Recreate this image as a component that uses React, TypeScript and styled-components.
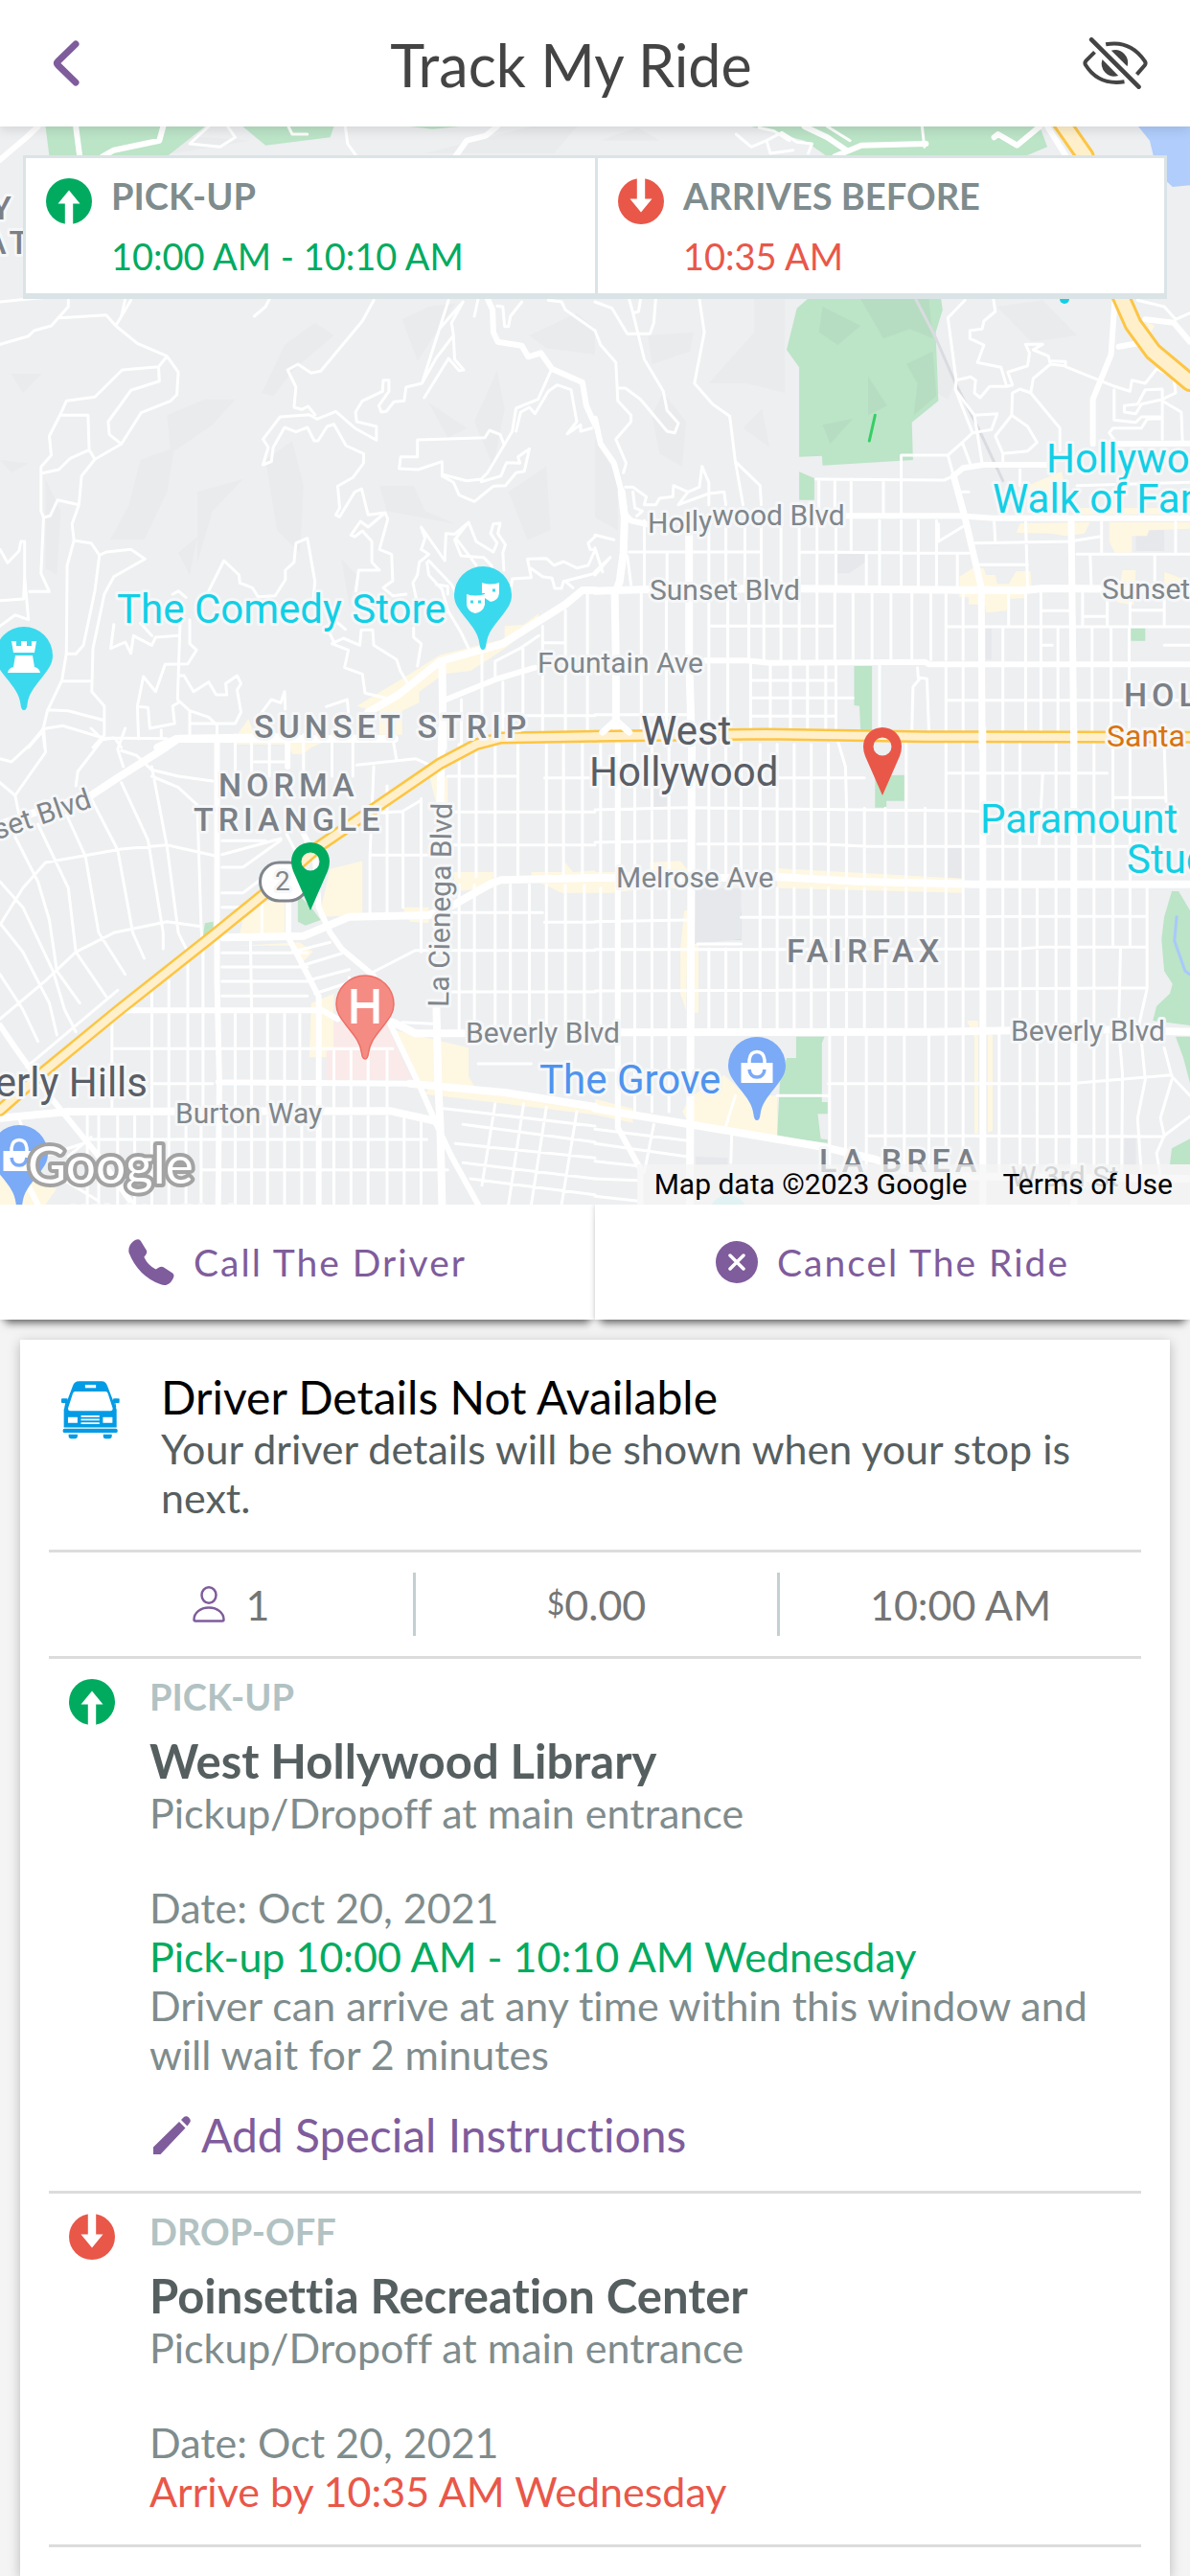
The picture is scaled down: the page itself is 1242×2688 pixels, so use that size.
import React from "react";
import styled, { createGlobalStyle } from "styled-components";

const color = {
  purple: "#7f5c9c",
  green: "#00ab60",
  red: "#e95749",
  slate: "#7f8c8d",
  slateDark: "#565f60",
  slateLight: "#b2c2c3",
  panelBorder: "#dae3e5",
  rule: "#dcdcdc",
  text: "#444444",
};

const GlobalStyle = createGlobalStyle`
  * { box-sizing: border-box; }
  html, body { margin: 0; background: #f4f4f4; }
  body, button { font-family: Lato, "Open Sans", sans-serif; font-variant-ligatures: none; }
  h1, h2, h3, p { margin: 0; font-weight: 400; }
`;

/* ---------- Layout ---------- */

const Page = styled.div`
  display: flex;
  flex-direction: column;
  min-height: 100vh;
`;

const Header = styled.header`
  display: flex;
  align-items: center;
  height: 132px;
  background: #fff;
  box-shadow: 0 3px 12px rgba(0, 0, 0, 0.12);
  position: relative;
  z-index: 1;
`;

const Title = styled.h1`
  flex: 1;
  padding-top: 3px;
  text-align: center;
  font-size: 61px;
  line-height: 72px;
  color: ${color.text};
`;

const IconButton = styled.button<{ $side: "left" | "right" }>`
  display: flex;
  align-items: center;
  align-self: stretch;
  justify-content: ${(p) => (p.$side === "left" ? "flex-start" : "flex-end")};
  width: ${(p) => (p.$side === "left" ? "84px" : "134px")};
  padding: ${(p) => (p.$side === "left" ? "0 0 0 55px" : "0 44px 0 0")};
  border: 0;
  background: none;
  color: ${(p) => (p.$side === "left" ? color.purple : color.text)};
  svg { flex: none; }
`;

const MapArea = styled.section`
  position: relative;
  overflow: hidden;
  background: #edeff1;
`;

const MapCanvas = styled.svg`
  display: block;
  width: 100%;
  height: auto;
`;

const TimesPanel = styled.div`
  position: absolute;
  top: 30px;
  left: 24px;
  right: 24px;
  display: grid;
  grid-template-columns: 1fr 1fr;
  background: #fff;
  border: 3px solid ${color.panelBorder};
  border-bottom-width: 6px;
`;

const TimeCell = styled.div`
  display: flex;
  gap: 20px;
  padding: 15px 21px;
  & + & { border-left: 3px solid ${color.panelBorder}; }
`;

const TimeText = styled.div`
  display: flex;
  flex-direction: column;
  gap: 15px;
`;

const StopLabel = styled.h2<{ $tone: string }>`
  font-size: 38px;
  line-height: 48px;
  font-weight: 700;
  color: ${(p) => p.$tone};
`;

const TimeValue = styled.p<{ $tone: string }>`
  font-size: 38px;
  line-height: 48px;
  color: ${(p) => p.$tone};
`;

const BadgeBox = styled.svg`
  flex: none;
  width: 48px;
  height: 48px;
  margin-top: 6px;
`;

const Attribution = styled.footer`
  position: absolute;
  right: 0;
  bottom: 0;
  display: flex;
  gap: 37px;
  height: 42px;
  padding: 0 18px;
  background: rgba(245, 245, 245, 0.7);
  font: 30px/42px Roboto, sans-serif;
  color: #000;
  a { color: inherit; text-decoration: none; }
`;

const Actions = styled.nav`
  display: grid;
  grid-template-columns: 1fr 1fr;
  background: #fff;
`;

const ActionButton = styled.button`
  display: flex;
  align-items: center;
  justify-content: center;
  gap: 20px;
  height: 120px;
  border: 0;
  background: #fff;
  color: ${color.purple};
  font-size: 39px;
  line-height: 48px;
  letter-spacing: 2px;
  box-shadow: 0 0 6px rgba(0, 0, 0, 0.2), 0 10px 8px -6px rgba(0, 0, 0, 0.5);
`;

const Card = styled.main`
  flex: 1;
  margin: 21px 21px 0;
  padding: 0 30px 27px;
  background: #fff;
  box-shadow: 0 3px 12px rgba(0, 0, 0, 0.25);
`;

const Driver = styled.section`
  display: flex;
  gap: 43px;
  padding: 31px 30px 29px 13px;
  border-bottom: 3px solid ${color.rule};
  svg { flex: none; margin-top: 12px; }
`;

const DriverTitle = styled.h2`
  font-size: 48px;
  line-height: 57px;
  color: #000;
`;

const Line = styled.p<{ $tone?: string }>`
  font-size: 43px;
  line-height: 51px;
  color: ${(p) => p.$tone ?? color.slate};
`;

const Stats = styled.section`
  display: grid;
  grid-template-columns: 1fr 1fr 1fr;
  padding: 21px 0;
  border-bottom: 3px solid ${color.rule};
`;

const Stat = styled.div`
  display: flex;
  align-items: center;
  justify-content: center;
  gap: 22px;
  height: 66px;
  font-size: 43px;
  line-height: 51px;
  color: #757575;
  & + & { border-left: 3px solid #c3cfd0; }
`;

const Currency = styled.span`
  font-size: 32px;
  line-height: 32px;
  vertical-align: 6px;
`;

const Stop = styled.section`
  display: flex;
  gap: 36px;
  padding: 15px 30px 30px 21px;
  border-bottom: 3px solid ${color.rule};
`;

const StopName = styled.h3`
  margin-top: 15px;
  font-size: 49px;
  line-height: 57px;
  font-weight: 700;
  color: ${color.slateDark};
`;

const Schedule = styled.div`
  margin-top: 48px;
`;

const InstructionsButton = styled.button`
  display: flex;
  align-items: center;
  gap: 11px;
  margin-top: 30px;
  padding: 0 0 0 4px;
  border: 0;
  background: none;
  color: ${color.purple};
  font-size: 48px;
  line-height: 57px;
`;

/* ---------- Icons ---------- */

const ArrowBadge = ({ down = false }: { down?: boolean }) => (
  <BadgeBox viewBox="0 0 48 48" aria-hidden="true">
    <circle cx="24" cy="24" r="24" fill={down ? color.red : color.green} />
    <path
      d="M24 12.5 35.5 26.5H28.2V48.5H19.8V26.5H12.5Z"
      fill="#fff"
      transform={down ? "rotate(180 24 24)" : undefined}
    />
  </BadgeBox>
);

const BackIcon = () => (
  <svg width="28" height="50" viewBox="0 0 28 50" fill="none" stroke="currentColor" strokeWidth="7" strokeLinecap="round" strokeLinejoin="round">
    <path d="M24 5 5.500 23Q3.500 25 5.500 27L24 45" />
  </svg>
);

const HiddenIcon = () => (
  <svg width="68" height="54" viewBox="61 57 203 162" fill="none" stroke="currentColor" strokeWidth="12">
    <path d="M88 64 236 212" strokeWidth="14" strokeLinecap="round" />
    <path d="M98 103 71 130Q65 137 70 144 110 208 191 196" />
    <path d="M133 79Q208 64 254 130 260 137 255 144L230 173" />
    <path d="M150 98A40 40 0 0 1 200 148Z" fill="currentColor" stroke="none" />
    <path d="M122 126A40 40 0 0 0 172 177Z" fill="currentColor" stroke="none" />
  </svg>
);

const PhoneIcon = () => (
  <svg width="48" height="48" viewBox="45 68 144 145" fill="currentColor">
    <path d="M50 86Q60 71 74 69 80 68 84 75L102 104Q104 110 100 116L94 125Q106 152 131 163L141 157Q148 153 155 156L184 175Q190 180 187 188 181 206 165 212 155 214 145 210 75 184 46 110 44 97 50 86Z" />
  </svg>
);

const CancelIcon = () => (
  <svg width="44" height="44" viewBox="0 0 44 44">
    <circle cx="22" cy="22" r="22" fill="currentColor" />
    <path d="M15 15 29 29M29 15 15 29" stroke="#fff" strokeWidth="3.500" strokeLinecap="round" />
  </svg>
);

const BusIcon = () => (
  <svg width="61" height="61" viewBox="72 62 184 184" fill="#039be5" aria-hidden="true">
    <path d="M80 208V152L108 78Q113 63 128 63H199Q212 63 217 78L246 152V208Z" />
    <path d="M116 95H211Q217 95 219 102L234 149Q234 156 228 156H99Q93 156 93 149L108 102Q110 95 116 95Z" fill="#fff" />
    <rect x="147" y="74" width="34" height="10" fill="#fff" />
    <rect x="93" y="176" width="30" height="18" fill="#fff" />
    <rect x="203" y="176" width="30" height="18" fill="#fff" />
    <path d="M134 173H192M134 184H192M134 195H192" stroke="#fff" strokeWidth="5" />
    <rect x="77" y="212" width="172" height="13" rx="5" />
    <path d="M95 230H123V238Q121 244 115 244H103Q97 244 95 238ZM204 230H231V238Q229 244 223 244H211Q205 244 204 238Z" />
    <rect x="72" y="117" width="20" height="14" rx="3" />
    <rect x="235" y="117" width="20" height="14" rx="3" />
    <path d="M88 124 84 145M239 124 243 145" stroke="#039be5" strokeWidth="4" />
  </svg>
);

const PersonIcon = () => (
  <svg width="34" height="38" viewBox="0 0 34 38" fill="none" stroke={color.purple} strokeWidth="2.500" aria-hidden="true">
    <ellipse cx="17" cy="9.500" rx="7.500" ry="8.200" />
    <path d="M17 22.500C8 22.500 1.500 28 1.500 35Q1.500 36.500 3 36.500H31Q32.500 36.500 32.500 35C32.500 28 26 22.500 17 22.500Z" />
  </svg>
);

const PencilIcon = () => (
  <svg width="39" height="40" viewBox="0 0 39 40" fill="currentColor" aria-hidden="true">
    <path d="M0 40V32.500L27 6 33.500 12.500 7.500 40ZM29 4 32 1Q34.500-.8 37 1.500 40 4.500 38 7L35.500 10.500Z" />
  </svg>
);

/* ---------- Map ---------- */

type Tile = { x: number; y: number; sx: number; sy: number };

/* Every tile keeps its own local units; these origins place it on the map. */
const tiles: Record<string, Tile> = {
  top: { x: 0, y: 0, sx: 1242 / 1568, sy: 1 / 3 },
  nw: { x: 0, y: 300, sx: 621 / 1568, sy: 1 / 3 },
  ne: { x: 621, y: 300, sx: 621 / 1568, sy: 1 / 3 },
  sw: { x: 0, y: 760, sx: 621 / 1568, sy: 1 / 3 },
  se: { x: 621, y: 760, sx: 621 / 1568, sy: 1 / 3 },
};

const project = (tile: string, data: string, close = false) => {
  const t = tiles[tile];
  return data
    .split(";")
    .map((line) => {
      const pts = line
        .trim()
        .split(/\s+/)
        .map((pair) => {
          const [x, y] = pair.split(",").map(Number);
          return `${(t.x + x * t.sx).toFixed(1)} ${(t.y + y * t.sy).toFixed(1)}`;
        });
      return `M${pts.join("L")}${close ? "Z" : ""}`;
    })
    .join("");
};

/* Straight grid streets: vertical ones at each x, horizontal ones at each y. */
const verticals = (xs: number[], from: number, to: number) =>
  xs.map((x) => `${x},${from} ${x},${to}`).join(";");
const horizontals = (ys: number[], from: number, to: number) =>
  ys.map((y) => `${from},${y} ${to},${y}`).join(";");

const minor: Record<string, string> = {
  top: "275,396 250,450 290,460 310,430 300,396;455,396 458,450 470,490;970,420 990,460 1010,440 1030,415 1050,445 1070,450 1065,480;1010,440 1015,480 1045,470;1000,400 1020,410 1040,440;1215,396 1218,460;380,396 385,420 405,420;1090,396 1120,440;0,945 40,935 90,925;355,936 350,960 335,990;165,936 160,990;630,936 625,990;1545,300 1535,330",
  nw: [
    "0,178 75,152 90,135 135,120 180,60 180,30;157,95 280,86 305,120 345,40",
    "305,120 362,175 440,215 418,248 322,258 250,343 175,355 158,400 130,465 135,525 108,562 108,700 115,720 108,895 130,952 78,952",
    "440,215 470,265 466,335 450,355 372,392 320,490 288,460 285,420 345,322 420,293 418,248",
    "320,490 250,538 215,590 208,680 190,740 195,792 177,870 175,1145 163,1230 125,1325 112,1390 75,1440",
    "158,400 232,400 235,508 185,535 155,570 108,582;235,508 250,538;115,720 132,715 152,665 208,680",
    "195,792 240,800 262,838 250,950 220,1120 200,1147 175,1147",
    "262,838 280,828 345,820 382,850 300,905 275,960 245,1130 242,1265 275,1310 275,1400 245,1440",
    "0,820 20,862 50,825 55,795 65,795 65,905 75,1040 40,1025 0,1060;65,905 62,975 0,980",
    "163,1232 240,1232;125,1322 180,1325 275,1355;112,1382 165,1372 272,1410 440,1412;112,1382 118,1440;305,1415 320,1440",
    "985,40 955,105 845,262 820,268 785,240 758,258 780,312 775,375 795,382 812,372 830,398",
    "693,555 707,500 693,475 738,405 815,398 835,412 885,388 935,440 992,478 992,435 940,420 937,390 955,355 1008,325 1010,290 1025,290 1025,325 998,370 1005,390 1018,388 1038,358 1065,355 1070,312 1112,300 1158,130 1182,40",
    "693,555 715,545 720,500 750,438 780,452 810,438 828,480 838,480 862,435 880,428 912,495 958,520 958,550 930,595 890,622 895,690 885,712 895,718 935,640 953,630 970,712 1015,705 1022,725 1000,820 1032,835 1035,918 1010,940 1035,965 1070,960",
    "1015,705 970,750 950,732 925,775 935,780 955,762 980,795 980,860 1000,885 945,885 938,950",
    "1220,45 1190,110 1195,150 1150,220 1112,300;1220,45 1158,130;1195,150 1198,225 1222,258 1210,260 1182,222 1118,345",
    "1310,58 1325,60 1330,122 1340,122 1345,90 1375,45;1445,40 1480,45 1490,70 1568,135",
    "1450,265 1418,350 1360,378 1350,450 1285,580 1268,600 1230,605 1165,585 1165,545 1102,570 1052,567 1056,530 1100,530 1100,477 1278,470 1290,447 1318,460 1328,490",
    "1495,458 1520,420 1505,320 1468,305 1445,325 1410,395 1395,375 1372,390 1360,450",
    "1395,505 1382,575 1360,580 1332,620 1300,622 1250,670 1210,650 1195,610 1165,590",
    "1268,608 1320,590 1335,548 1370,550 1365,530 1392,508;1495,458 1530,430 1530,450 1560,440",
    "550,950 590,855 630,900 632,925 665,940 680,968 725,965 752,915 752,885 775,860 780,800 810,785 830,920 825,985",
    "1110,750 1120,785 1110,820 1130,835 1105,860 1100,900 1088,925 1100,990",
    "1110,750 1172,855 1175,770 1198,772 1235,735 1255,795 1300,828 1310,800 1293,770 1300,740 1318,738 1312,770 1332,805 1325,830 1328,885",
    "1235,735 1198,790 1215,840 1275,845 1295,870 1305,960;1205,790 1240,845 1255,870;1130,855 1190,930 1220,1000;1125,860 1130,900 1165,945 1180,1010 1215,1080 1235,1130",
    "1568,780 1550,800 1555,820 1568,822 1550,870 1520,878 1485,858 1460,870 1440,848 1390,850 1400,908 1350,912 1345,950",
    "1400,880 1430,905 1455,910 1462,942 1480,942 1485,920 1568,895;1490,920 1510,940",
    "455,960 470,950 490,970;475,1040 468,1290 500,1325 550,1345 572,1370 572,1413;292,1130 330,1110 345,1145 352,1090 400,1120 410,1095 470,1090;292,1130 300,1055;370,1050 400,1090",
    "500,1040 500,1115 518,1135 495,1178 435,1180 410,1265 378,1218 362,1310 365,1413",
    "470,1215 485,1215 510,1265 550,1235 570,1275 598,1275 595,1240 625,1215 635,1240 625,1260 635,1330 620,1365 500,1365;500,1325 500,1413",
    "362,1312 390,1315 395,1380 460,1365 455,1310 470,1300;425,1385 425,1410;690,1330 715,1290 740,1300 750,1265 752,1320;860,1312 915,1290 918,1330",
    "875,1115 905,1098 948,1120 952,1072 982,1072 985,1120 1045,1165 1055,1200 1075,1240;875,1115 918,1135 908,1190 955,1210 962,1270 1015,1285;860,1060 880,1110;890,1050 910,1070",
    "1090,1065 1090,1095 1110,1115 1100,1185;1305,1220 1305,1170 1370,1130 1420,1090;1432,1112 1490,1112;1325,1340 1568,1340;1150,930 1180,935 1180,960",
    verticals([1270], 1150, 1440), verticals([1216], 1290, 1440), verticals([1325], 1235, 1390),
    verticals([1378], 1130, 1390), verticals([1430], 1060, 1390), verticals([1490], 1010, 1390), verticals([1548], 960, 1390),
  ].join(";"),
  ne: [
    "0,45 45,65 85,145 145,145 155,110 160,36;90,36 100,80 115,75 120,36;100,80 130,225 180,325 190,385 220,425 210,455 190,450 120,350 80,315 60,315",
    "0,135 15,180 55,235 60,355 95,400 95,420 55,475 82,550 75,580",
    "275,36 288,140 262,300 310,365 355,403 370,545 435,620 438,680;370,545 390,680",
    "80,625 100,625 135,655 130,680 160,680 170,660 205,655 207,620 245,640 275,625 282,560 300,610 300,680;245,640 220,680 300,645 340,640 345,680;100,640 105,690 125,700 110,715",
    "975,40 930,95 952,290 950,320 1000,400 1060,395 1045,445 995,455;950,320 995,455;1000,400 1020,550",
    "952,290 990,280 1003,290 1000,330 1015,345 1040,310 1085,310 1070,250 1008,235 1025,180 988,160 988,135 1020,130 1025,105 1055,75 1050,36",
    "1085,310 1100,305 1088,265 1140,245 1145,205 1135,178 1180,178 1155,195 1195,215 1200,240 1240,245 1240,232 1205,230;1240,248 1370,310 1410,325;1200,240 1155,285 1148,330",
    "1148,330 1225,440 1225,510;1148,330 1120,318 1100,330 1098,400 1140,435 1165,485 1140,512 1075,520 1055,465 1098,400;1075,520 1075,550",
    "1525,280 1530,330 1495,350 1440,365 1425,395 1395,390 1395,370 1430,365 1450,320 1495,318 1495,475;1368,320 1368,415 1425,422 1440,405 1490,405",
    "1495,355 1545,390 1548,480;1410,325 1415,290 1450,300 1480,255 1525,280;1370,480 1355,455 1365,440 1440,440 1455,412 1495,410;1430,40 1500,60 1530,100 1568,80",
    "582,600 920,603 945,590;807,603 807,525 930,525 968,485 995,455;930,525 945,590;968,485 990,555",
    "905,795 975,745;1000,800 1250,795 1330,780;1015,868 1140,868;1135,735 1140,940;1052,735 1055,795;1270,835 1568,835;1305,835 1308,940;1120,570 1120,620;1270,620 1568,610;968,640 985,640;1335,735 1335,835;1475,835 1475,920;1530,735 1530,835",
    "1180,1012 1250,1012;1285,1030 1350,1030;1410,1010 1500,1010;1180,1120 1205,1120;1500,1120 1568,1120;835,1390 838,1250 858,1222 875,1225 880,1390;850,1190 852,1222",
    "90,828 435,828;540,828 985,832;905,740 905,795;0,775 50,790;0,890 40,845;0,815 20,890;40,845 0,900;85,840 95,930;0,1337 245,1337",
    verticals([130, 300, 345, 395, 438, 490, 538, 585, 635, 750, 807, 852, 900], 730, 940),
    verticals([190, 715, 955], 832, 940), verticals([675], 720, 820), verticals([590, 632, 675, 760, 807], 600, 712),
    verticals([122, 188, 300, 350, 405, 445, 490, 538, 585, 632, 680, 730, 780, 835, 885, 925, 970], 955, 1165),
    verticals([122, 188, 300, 350, 410, 462, 515, 560, 608, 635, 750, 925, 970], 1175, 1390),
    verticals([1075, 1135, 1175, 1220, 1310, 1360, 1408], 1062, 1390), verticals([1090, 1135, 1175, 1285, 1350, 1410, 1500], 955, 1062),
    horizontals([1060], 305, 630), horizontals([1062], 925, 1568), horizontals([1230, 1285, 1342], 410, 635), horizontals([1292], 925, 1568), horizontals([1285], 635, 680),
  ].join(";"),
  sw: [
    "0,615 60,500 120,420 320,378 440,365 570,400;585,395 740,345;0,910 120,790 200,700 300,640 440,605 530,620",
    "40,340 100,480 130,600 150,760 210,860;100,300 180,500 200,700 280,840;175,270 225,400 260,640 330,770;240,220 310,380 350,640 380,720;320,170 390,350 430,640 430,690;400,120 440,370 470,640 495,700",
    "0,480 60,560 140,760 170,880 200,950;0,610 60,700 130,860 150,960;0,770 60,880 100,980;520,240 530,620 535,700",
    "0,95 30,105 80,50 115,0;115,0 120,75 40,210 50,270;200,180 205,135 270,35 300,30;270,35 240,0;310,65 330,0;320,70 360,85 400,130 470,150 560,165;310,65 325,120;0,170 40,210",
    "70,1060 310,820;400,150 470,185 520,240;585,435 640,435 740,350;585,352 700,352;585,515 640,515 690,470;585,560 640,560;585,605 620,605;690,540 690,650",
    "980,765 1095,695;770,700 870,670;790,745 900,705;810,790 920,755;830,830 935,790;920,780 940,830;660,660 663,880",
    "940,115 1095,95 1160,130;985,120 975,400 975,580;985,265 1060,260 1110,225;975,397 1125,397;1020,180 1020,580;1062,260 1062,560;1110,220 1110,700;670,105 750,105;1035,30 1045,100",
    "1170,1190 1568,1245;1200,1300 1568,1345;1220,1360 1568,1410;1240,1410 1568,1460;1220,1240 1568,1295;1305,1175 1270,1430;1380,1175 1340,1491;1440,1185 1400,1491;1520,1200 1480,1491",
    "50,1220 70,1290;60,1360 220,1300;150,1400 260,1480;180,1340 240,1280;1060,920 1140,925;755,330 785,400",
    verticals([400, 445, 495, 535, 620, 663, 705, 750, 790], 895, 1195), verticals([295], 920, 1190), verticals([880, 925, 970, 1020], 1010, 1190),
    verticals([400, 445], 790, 880), verticals([495, 535], 700, 880),
    verticals([230, 260, 310, 355, 400, 445, 490, 530, 620, 663, 705, 750, 795, 880, 925, 970, 1020, 1065, 1110], 1215, 1491),
    verticals([620, 663, 710, 800, 875, 930], 20, 150),
    verticals([1210, 1255, 1305, 1365, 1440, 1485, 1535], 50, 465), verticals([1210, 1250, 1305, 1345, 1395, 1440, 1490, 1540], 490, 945),
    horizontals([703, 747, 792, 838], 585, 810), horizontals([1287], 240, 1125), horizontals([1382], 530, 1180), horizontals([1003], 295, 1035), horizontals([1112], 400, 560),
    horizontals([150], 1180, 1365), horizontals([155], 1435, 1568), horizontals([262, 365], 1190, 1568), horizontals([695], 1095, 1568), horizontals([825], 1180, 1568),
    horizontals([577], 1140, 1430), horizontals([607], 1435, 1568), horizontals([1050], 1260, 1400),
  ].join(";"),
  se: [
    "0,255 240,248 480,252 700,255 970,258 1010,260;0,357 240,352;270,362 600,362 720,370 1455,370;0,605 245,600;385,592 1455,588;0,692 480,692 1120,690 1180,685 1455,685;0,822 480,820 1455,812",
    "615,1112 1250,1112 1520,1085;715,1275 1500,1278;480,155 710,155;925,140 1350,140;1365,217 1500,217;480,1150 618,1150;270,675 385,675;640,40 660,120 663,250",
    "1180,140 1170,370;1500,50 1505,230;1455,500 1455,815 1435,920 1450,1100 1430,1220 1440,1400;1385,690 1380,940 1390,1080 1388,1400;1500,1000 1520,1090 1568,1150;1520,1100 1490,1220 1500,1275 1480,1330 1490,1400;1568,1215 1500,1275",
    "0,1255 240,1290;0,1300 240,1340;0,1355 115,1370;0,1410 115,1415;0,1465 115,1480;155,1240 130,1390;360,1275 358,1360;370,1150 345,1245",
    verticals([15, 105, 150, 195, 300, 345, 385, 435, 480, 525, 570, 615], 50, 460), verticals([663, 710, 765, 820, 870, 925, 970], 250, 475), verticals([820, 925, 970], 40, 250),
    verticals([15, 105, 150, 195, 435, 480, 525, 570, 615, 663, 710, 765, 820, 870, 925, 970], 500, 940), verticals([300, 345, 385], 690, 940),
    verticals([1075, 1120, 1215, 1315, 1365, 1410], 40, 480), verticals([1075, 1120, 1165, 1215, 1315], 500, 940), verticals([1365, 1410], 500, 680),
    verticals([105, 150, 195], 960, 1200), verticals([618, 660, 715, 765, 815, 880, 925, 970], 960, 1380), verticals([1065, 1120, 1165, 1215, 1315, 1350], 960, 1390), horizontals([1070], 0, 100),
  ].join(";"),
};

const medium: Record<string, string> = {
  top: "50,396 35,430 0,500;100,396 105,490;215,396 210,440 150,470 135,490;655,396 640,425 615,440 600,490;1060,396 1090,430 1115,470;1100,490 1135,455 1220,450;1370,396 1340,455 1315,420 1310,430;1380,396 1405,490",
  nw: "1285,35 1298,70 1300,140 1312,170 1375,182 1392,217 1425,205 1455,255 1535,297 1545,370 1568,430;1175,1290 1310,1225 1410,1190",
  ne: "0,410 15,490 50,550 70,640 80,710 95,730 140,742;945,590 970,565 1025,555 1190,555;1370,36 1360,210 1312,350 1312,490;1365,490 1568,488;1380,185 1430,175;1450,100 1525,110 1568,170;290,1168 400,1168 460,1175 870,1172 880,1180 1568,1180;640,715 960,715 1050,722 1568,722",
  sw: "758,20 758,120;572,40 572,790 578,1100 575,1491;800,330 830,400 840,560 870,640 900,690 985,775 1030,930 1110,1130 1150,1240 1190,1340 1260,1491;760,540 760,655 840,840 840,1491;330,883 850,883 890,910;575,1108 1080,1112;0,930 40,1000 130,1150 260,1340 350,1491;0,1350 70,1420 100,1491",
  se: "60,50 60,1250 120,1380 120,1491",
};

const major: Record<string, string> = {
  nw: "1568,948 1535,948 1490,992 1325,1115 1160,1170 1050,1275 970,1330;415,1440 465,1413 1040,1413;1165,1170 1168,1440",
  ne: "0,950 50,948 145,945 530,943 1130,948 1180,942 1568,945;70,640 78,720 75,830 65,920 52,960 55,1160 55,1390;248,780 248,1160 255,1440",
  sw: "730,28 470,32 430,65 310,155 240,210 100,260 0,300;1165,0 1160,240;1150,880 1155,1120 1160,1240 1165,1491;1220,955 1095,955 1035,920;1568,468 1320,475 1295,485 1200,550 1130,585 920,590 800,650 590,655;1080,1112 1330,1140 1568,1185;0,1220 180,1200 1030,1198 1150,1230",
  se: "255,50 250,1491;0,468 240,470 480,465 700,480 1000,488 1568,488;0,952 890,950 1300,942 1568,950;0,1190 250,1240 600,1310 740,1350 850,1400 1568,1410",
};

const overpasses: Record<string, string> = {
  ne: "945,590 975,720 1018,940 1020,1440;1255,730 1262,1440;20,1392 55,1355 90,1392",
  se: "1022,0 1022,1491;1262,0 1262,1491",
};

const parks: Record<string, string> = {
  top: "60,396 270,396 220,490 65,490;320,396 440,396 435,430 350,455;540,396 605,396 570,404;990,396 1370,396 1380,460 1350,490 1090,490 1060,440",
  ne: "560,36 532,65 505,195 538,250 538,530 598,527 600,557 838,540 835,422 905,355 898,140 916,70 912,36;538,577 578,597 578,665 538,665;683,1185 730,1185 730,1385 700,1385 697,1310 683,1308;1412,1066 1450,1066 1450,1106 1412,1106",
  sw: "785,520 820,560 845,600 805,617 785,605;540,610 562,605 562,635 535,650",
  se: "738,148 815,146 815,227 768,227 768,248 738,248;333,582 385,573 385,662 348,662 333,620;530,965 605,965 598,985 598,1170 613,1170 613,1207 587,1207 595,1285 613,1288 613,1298 480,1278 487,1110 505,1032 530,1032;1520,510 1538,510 1568,570 1568,930 1470,915 1480,870 1515,830 1522,800 1500,760 1493,660 1500,590;1530,965 1568,965 1568,1110 1550,1030;1568,1285 1520,1315 1515,1365 1568,1365",
};

const shops: Record<string, string> = {
  nw: "940,1310 1080,1210 1160,1150 1330,1100 1330,1060 1380,1055 1420,1020 1420,1045 1330,1130 1240,1200 1170,1210 1105,1265 1105,1300 1060,1325 980,1325;625,1400 655,1350 670,1400;1000,1320 1060,1320 1060,1400 1000,1400",
  ne: "1120,738 1110,768 1200,770 1240,778 1290,770 1305,735;1355,735 1568,735 1568,755 1460,760 1455,778 1415,778 1415,830 1370,830 1355,795;960,905 1000,875 1025,880 1030,900 1055,900 1060,928 1090,928 1110,888 1148,888 1150,935 1135,972 1088,975 1085,1012 1030,1018 1028,992 985,992 985,970 960,970;1140,620 1230,575 1250,700 1140,705;1270,690 1568,690 1568,710 1270,710;1390,885 1425,885 1420,995 1375,985;1500,890 1568,920 1500,930;1395,130 1420,165 1440,140;1450,105 1475,120 1465,140",
  sw: "870,440 955,415 955,585 840,590;640,600 700,540 750,540 750,650 630,650;1040,945 1235,1000 1235,1090 1250,1120 1110,1110;1130,140 1180,150 1180,240 1150,240;1195,450 1300,450 1300,500 1200,510;1400,450 1480,450 1490,420 1510,450 1568,445 1568,515 1480,515 1400,470;1130,1125 1568,1175 1568,1210 1120,1145;820,860 880,830 880,1030 815,1030;630,680 790,670 825,700 790,740 765,680;620,35 870,35 820,60 800,80 770,80 760,50 620,50;0,1400 100,1400 150,1440 120,1491 0,1491;1060,560 1130,560 1130,610 1080,605",
  se: "0,450 145,450 145,420 225,415 245,445 245,500 145,500 45,515 0,515;480,438 970,470 970,515 480,500;235,570 245,570 240,885 225,830 225,690;262,675 273,675 273,890 262,890;980,915 1010,915 1010,1270 1000,1270 1000,970;1035,960 1048,960 1048,1260 1035,1265;250,1155 340,1085 400,1150 480,1150 480,1278 250,1240 230,1200;0,1160 100,1190 100,1235 0,1210",
};

const blocks: Record<string, string> = {
  ne: "640,835 712,835 712,860 670,895 635,895;1425,760 1500,760 1500,825 1425,825;1030,1065 1045,1065 1045,1165 1030,1165",
  se: "262,500 385,500 385,660 262,675;930,375 970,375 970,475 930,475;155,190 190,190 190,245 155,245;265,1340 350,1345 350,1370 265,1370;1395,1280 1425,1280 1425,1370 1395,1370",
  sw: "680,550 695,570 685,600",
};

const hills: Record<string, string> = {
  top: "560,480 700,396 760,396 730,480;790,440 840,400 870,440;170,470 210,420 330,440 230,480",
  nw: "30,270 110,270 60,330;690,330 750,180 830,110 880,150 780,250 720,340;440,400 540,350 620,350 560,430 450,520;370,540 460,500 440,640 380,790 290,790 340,680;700,540 770,480 800,620 790,830 730,760;520,640 640,600 560,700 520,860;1000,620 1090,620 1120,700 1200,740 1020,700;1310,260 1330,380 1300,560 1250,420;1395,150 1520,80 1568,130 1568,210 1440,190;1340,640 1440,560 1450,760 1390,790;0,540 75,550 30,580;120,600 160,700 150,900 120,880;1060,100 1130,60 1200,50 1100,230;1130,360 1230,440 1180,470;470,830 520,780 500,900;900,850 940,900 920,1000",
  ne: "140,150 260,140 250,200 150,240;300,300 420,140 420,36 500,36 500,330 400,300;180,330 240,420 230,560 170,520 150,400;390,440 440,380 460,500;1060,60 1180,40 1270,150 1150,170;0,470 60,600 60,760 0,720;900,180 950,290 930,350 900,330",
};

const slopes: Record<string, string> = {
  ne: "600,60 700,120 640,180 590,140;700,36 880,36 890,160 830,130 760,160;820,240 890,200 900,340 840,400 850,300;720,280 770,370 720,400;600,430 680,410 620,490",
};

const Layer = ({ data, width, stroke, fill, opacity }: {
  data: Record<string, string>;
  width?: number;
  stroke?: string;
  fill?: string;
  opacity?: number;
}) => (
  <g fill={fill ?? "none"} stroke={stroke} strokeWidth={width} strokeLinejoin="round" strokeLinecap={fill ? undefined : "round"} opacity={opacity}>
    {Object.entries(data).map(([tile, d]) => (
      <path key={tile} d={project(tile, d, Boolean(fill))} />
    ))}
  </g>
);

const highway: Record<string, string> = {
  ne: "0,1405 450,1398 870,1406 1568,1408",
  sw: "1568,25 1320,30 1255,50 1160,110 840,370 700,515 560,650 310,885 110,1080 0,1195",
};

const freeway: Record<string, string> = {
  top: "1398,380 1430,490",
  ne: "1375,0 1390,40 1418,115 1470,200 1568,297",
};

const labelTone = {
  street: "#80868b",
  area: "#7b8087",
  city: "#5a5e66",
  poi: "#12cfe6",
  shop: "#4f93ee",
  route: "#d9730d",
};

const Label = styled.text<{ $tone: keyof typeof labelTone; $size?: number }>`
  font-family: Roboto, sans-serif;
  font-size: ${(p) => p.$size ?? 30}px;
  font-weight: ${(p) => (p.$tone === "area" ? 500 : 400)};
  letter-spacing: ${(p) => (p.$tone === "area" ? 5 : 0)}px;
  fill: ${(p) => labelTone[p.$tone]};
  stroke: #f6f7f8;
  stroke-width: 6px;
  stroke-linejoin: round;
  paint-order: stroke;
`;

const Wordmark = styled.text`
  font-family: Lato, sans-serif;
  font-size: 55px;
  font-weight: 400;
  fill: #fff;
  stroke: #a3a3a3;
  stroke-width: 8px;
  stroke-linejoin: round;
  paint-order: stroke;
`;

const PlacePin = ({ x, y, fill, edge, children }: {
  x: number;
  y: number;
  fill: string;
  edge?: string;
  children?: React.ReactNode;
}) => (
  <g transform={`translate(${x} ${y})`}>
    <path
      d="M0 87C-2 87-3 85-3.500 81C-5 70-10 64-18 54C-25 45-30 39-30 30A30 30 0 0 1 30 30C30 39 25 45 18 54C10 64 5 70 3.500 81C3 85 2 87 0 87Z"
      fill={fill}
      stroke={edge}
      strokeWidth="1.500"
    />
    {children}
  </g>
);

const StopPin = ({ x, y, fill }: { x: number; y: number; fill: string }) => (
  <path
    transform={`translate(${x} ${y})`}
    fill={fill}
    fillRule="evenodd"
    d="M0 71-18 30Q-20 25-20 20A20 20 0 0 1 20 20Q20 25 18 30ZM0 10.500A9.500 9.500 0 1 0 0 29.500A9.500 9.500 0 1 0 0 10.500Z"
  />
);

const Bag = () => (
  <g>
    <path d="M-16.500 27H16.500V48H-16.500Z" fill="#fff" />
    <path d="M-8 28V24Q-7 15.500 0 15.500T8 24V28" fill="none" stroke="#fff" strokeWidth="3.500" />
    <path d="M-8 34Q-7 42 0 42T8 34" fill="none" stroke="#7baaf7" strokeWidth="3.500" />
  </g>
);

const CityMap = () => (
  <MapCanvas viewBox="0 132 1242 1125" role="img" aria-label="Map of West Hollywood with the pick-up and drop-off stops">
    <rect y="132" width="1242" height="1125" fill="#edeff1" />
    <Layer data={hills} fill="#e9ebed" />
    <Layer data={parks} fill="#bce4c7" />
    <Layer data={slopes} fill="#b4dabf" opacity={0.7} />
    <Layer data={{ top: "1500,396 1568,396 1568,580 1545,585 1525,540 1515,440" }} fill="#b0cdfb" />
    <Layer data={blocks} fill="#e7e8ec" />
    <Layer data={shops} fill="#fef7e2" />
    <Layer data={{ sw: "880,920 1020,930 1085,1100 860,1100 860,1010 880,1005" }} fill="#fbeaea" />
    <Layer data={{ ne: "845,36 895,150 950,300 1010,440 1075,605" }} stroke="#dadbe0" width={3} />
    <Layer data={{ ne: "738,400 723,480" }} stroke="#34cf66" width={3} />
    <Layer data={{ se: "1533,590 1527,665 1555,760 1568,770" }} stroke="#a9c9fb" width={3} />
    <Layer data={minor} stroke="#fff" width={3} />
    <Layer data={medium} stroke="#fff" width={6} />
    <Layer data={major} stroke="#fff" width={8} />
    <Layer data={highway} stroke="#fdc543" width={13} />
    <Layer data={highway} stroke="#fff0cb" width={8} />
    <Layer data={freeway} stroke="#fdc543" width={20} />
    <Layer data={freeway} stroke="#fff0cb" width={14} />
    <Layer data={overpasses} stroke="#fff" width={7} />
    <circle cx="1111" cy="312" r="5" fill="#12cfe6" />
    <circle cx="760" cy="1267" r="20" fill="#b3ebee" />

    <Label $tone="area" $size={34} x="-9" y="229">Y</Label>
    <Label $tone="area" $size={34} x="-16" y="265">AT</Label>
    <Label $tone="street" x="676" y="556">
      Hol<tspan dy="-2">ly</tspan><tspan dy="-6">wood Blvd</tspan>
    </Label>
    <Label $tone="street" x="678" y="626">Sunset Blvd</Label>
    <Label $tone="street" x="1150" y="625">Sunset Blvd</Label>
    <Label $tone="street" x="561" y="702">Fountain Ave</Label>
    <Label $tone="street" x="643" y="926">Melrose Ave</Label>
    <Label $tone="street" x="486" y="1088">Beverly Blvd</Label>
    <Label $tone="street" x="1055" y="1086">Beverly Blvd</Label>
    <Label $tone="street" x="183" y="1172">Burton Way</Label>
    <Label $tone="street" x="1055" y="1238">W 3rd St</Label>
    <Label $tone="street" x="74" y="1280">Wilshire Blvd</Label>
    <Label $tone="street" textAnchor="end" transform="translate(97 842) rotate(-19)">Sunset Blvd</Label>
    <Label $tone="street" transform="translate(468 1051) rotate(-89)">La Cienega Blvd</Label>
    <Label $tone="area" $size={34} x="265" y="770">SUNSET STRIP</Label>
    <Label $tone="area" $size={34} x="228" y="831">NORMA</Label>
    <Label $tone="area" $size={34} x="202" y="867">TRIANGLE</Label>
    <Label $tone="area" $size={34} x="821" y="1004">FAIRFAX</Label>
    <Label $tone="area" $size={34} x="855" y="1223">LA BREA</Label>
    <Label $tone="area" $size={34} x="1173" y="737">HOLLYWOOD</Label>
    <Label $tone="route" $size={32} x="1155" y="779">Santa Monica Blvd</Label>
    <Label $tone="city" $size={42} x="669" y="777">West</Label>
    <Label $tone="city" $size={42} x="615" y="820">Hollywood</Label>
    <Label $tone="city" $size={42} x="154" y="1144" textAnchor="end">Beverly Hills</Label>
    <Label $tone="poi" $size={42} x="122" y="650">The Comedy Store</Label>
    <Label $tone="poi" $size={42} x="1092" y="493">Hollywood</Label>
    <Label $tone="poi" $size={42} x="1036" y="535">Walk of Fame</Label>
    <Label $tone="poi" $size={42} x="1023" y="869">Paramount</Label>
    <Label $tone="poi" $size={42} x="1176" y="911">Studios</Label>
    <Label $tone="shop" $size={42} x="563" y="1141">The Grove</Label>

    <rect x="271.500" y="900" width="50" height="40" rx="20" fill="#fff" stroke="#80868b" strokeWidth="3" />
    <Label $tone="street" $size={28} x="287" y="929">2</Label>

    <PlacePin x={504} y={591} fill="#3bd9ee">
      <path d="M-1 17Q8 20 17 17V28Q16 36 8 37L2 33V28H-1Z" fill="#fff" />
      <path d="M-17 29Q-8 32 2 29V40Q0 48-8 49Q-16 47-17 40Z" fill="#fff" />
      <path d="M-13 37H-10M-5 37H-2M10 25H13" stroke="#3bd9ee" strokeWidth="3" />
    </PlacePin>
    <PlacePin x={25} y={654} fill="#3bd9ee">
      <path d="M-13 15H-8V20H-3V15H3V20H8V15H13L11 27H-11ZM-9 30H9L11 42Q16 43 17 48H-17Q-16 43-11 42Z" fill="#fff" />
    </PlacePin>
    <PlacePin x={381} y={1018} fill="#f48c84" edge="#ee6f64">
      <path d="M-11.500 14V50M11.500 14V50M-11.500 31H11.500" stroke="#fff" strokeWidth="6" />
    </PlacePin>
    <PlacePin x={790} y={1082} fill="#7baaf7"><Bag /></PlacePin>
    <PlacePin x={20} y={1174} fill="#7baaf7"><Bag /></PlacePin>
    <StopPin x={324} y={879} fill={color.green} />
    <StopPin x={921} y={759} fill={color.red} />
    <Wordmark x="29" y="1235">Google</Wordmark>
  </MapCanvas>
);

/* ---------- Screen ---------- */

type StopInfo = {
  label: string;
  name: string;
  when: string;
  tone: string;
  down?: boolean;
  note?: string;
  editable?: boolean;
};

const stops: StopInfo[] = [
  {
    label: "PICK-UP",
    name: "West Hollywood Library",
    when: "Pick-up 10:00 AM - 10:10 AM Wednesday",
    tone: color.green,
    note: "Driver can arrive at any time within this window and will wait for 2 minutes",
    editable: true,
  },
  {
    label: "DROP-OFF",
    name: "Poinsettia Recreation Center",
    when: "Arrive by 10:35 AM Wednesday",
    tone: color.red,
    down: true,
  },
];

export default function App() {
  return (
    <>
      <GlobalStyle />
      <Page>
        <Header>
          <IconButton type="button" $side="left" aria-label="Back"><BackIcon /></IconButton>
          <Title>Track My Ride</Title>
          <IconButton type="button" $side="right" aria-label="Hide map"><HiddenIcon /></IconButton>
        </Header>

        <MapArea>
          <CityMap />
          <TimesPanel>
            <TimeCell>
              <ArrowBadge />
              <TimeText>
                <StopLabel $tone={color.slate}>PICK-UP</StopLabel>
                <TimeValue $tone={color.green}>10:00 AM - 10:10 AM</TimeValue>
              </TimeText>
            </TimeCell>
            <TimeCell>
              <ArrowBadge down />
              <TimeText>
                <StopLabel $tone={color.slate}>ARRIVES BEFORE</StopLabel>
                <TimeValue $tone={color.red}>10:35 AM</TimeValue>
              </TimeText>
            </TimeCell>
          </TimesPanel>
          <Attribution>
            <span>Map data ©2023 Google</span>
            <a href="#terms">Terms of Use</a>
          </Attribution>
        </MapArea>

        <Actions>
          <ActionButton type="button"><PhoneIcon />Call The Driver</ActionButton>
          <ActionButton type="button"><CancelIcon />Cancel The Ride</ActionButton>
        </Actions>

        <Card>
          <Driver>
            <BusIcon />
            <div>
              <DriverTitle>Driver Details Not Available</DriverTitle>
              <Line $tone={color.slateDark}>Your driver details will be shown when your stop is next.</Line>
            </div>
          </Driver>
          <Stats>
            <Stat><PersonIcon />1</Stat>
            <Stat><span><Currency>$</Currency>0.00</span></Stat>
            <Stat>10:00 AM</Stat>
          </Stats>
          {stops.map((stop) => (
            <Stop key={stop.label}>
              <ArrowBadge down={stop.down} />
              <div>
                <StopLabel $tone={color.slateLight}>{stop.label}</StopLabel>
                <StopName>{stop.name}</StopName>
                <Line>Pickup/Dropoff at main entrance</Line>
                <Schedule>
                  <Line>Date: Oct 20, 2021</Line>
                  <Line $tone={stop.tone}>{stop.when}</Line>
                  {stop.note && <Line>{stop.note}</Line>}
                </Schedule>
                {stop.editable && (
                  <InstructionsButton type="button"><PencilIcon />Add Special Instructions</InstructionsButton>
                )}
              </div>
            </Stop>
          ))}
        </Card>
      </Page>
    </>
  );
}
